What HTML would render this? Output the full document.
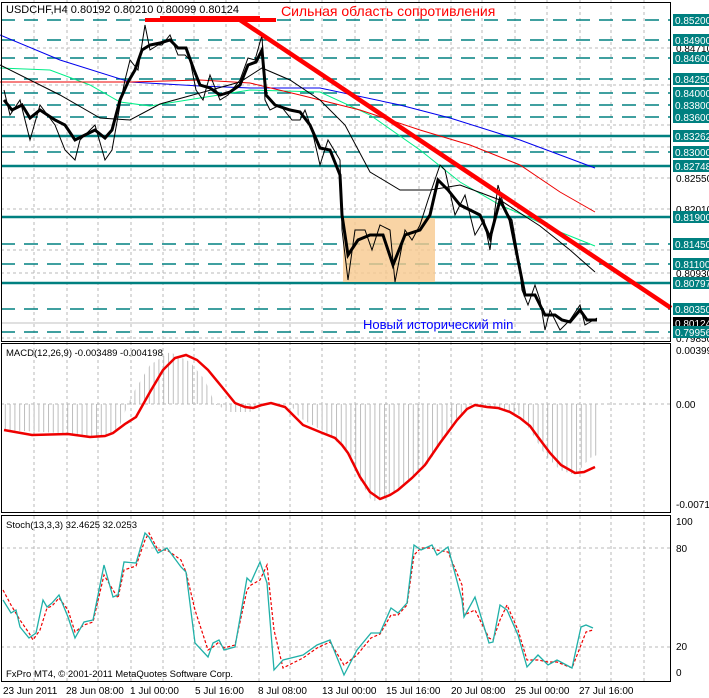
<!DOCTYPE html>
<html><head><meta charset="utf-8"><style>
html,body{margin:0;padding:0;background:#fff;}
body{width:709px;height:698px;overflow:hidden;font-family:"Liberation Sans",sans-serif;}
svg{display:block}
</style></head><body>
<svg width="709" height="698" viewBox="0 0 709 698" xmlns="http://www.w3.org/2000/svg" font-family="Liberation Sans, DejaVu Sans, sans-serif">
<defs>
<pattern id="hs" width="4.8" height="10" patternUnits="userSpaceOnUse"><rect x="0" y="0" width="1" height="10" fill="#bdbdbd"/></pattern>
</defs>
<rect width="709" height="698" fill="#fff"/>
<g stroke="#b8b8b8" stroke-dasharray="3,3" stroke-width="1">
<path d="M34 0V681M67 0V681M98 0V681M131 0V681M163 0V681M194 0V681M226 0V681M259 0V681M290 0V681M322 0V681M355 0V681M386 0V681M419 0V681M451 0V681M482 0V681M515 0V681M547 0V681M580 0V681M611 0V681M644 0V681"/>
<path d="M1 48H671M1 85H671M1 125H671M1 147H671M1 178H671M1 209H671M1 250H671M1 273H671M1 338H671"/>
<path d="M1 404H671M1 548H671M1 647H671"/>
</g>
<g stroke="#008080" stroke-width="1.5" stroke-dasharray="14,9">
<path d="M1 20H671M1 40H671M1 58H671M1 79H671M1 93H671M1 105H671M1 117H671M1 152H671M1 244H671M1 264H671M1 309H671M1 332H671"/>
</g>
<g stroke="#008080" stroke-width="2.5">
<path d="M1 136H671M1 166H671M1 217H671M1 283H671"/>
</g>
<line x1="1" y1="323" x2="671" y2="323" stroke="#c0c0c0"/>
<rect x="343" y="218" width="92" height="64" fill="#f8c98e" opacity="0.8"/>
<polyline fill="none" stroke="#0000ee" stroke-width="1" points="0,35 60,60 130,82 200,86 250,88 320,88 400,105 450,118 520,140 595,168"/>
<polyline fill="none" stroke="#00ee88" stroke-width="1" points="0,68 50,70 90,85 120,102 150,106 200,98 250,90 320,92 370,115 420,150 460,182 500,205 530,218 560,232 595,246"/>
<polyline fill="none" stroke="#ee0000" stroke-width="1" points="0,82 130,82 200,80 250,83 300,95 360,110 420,130 470,145 520,165 560,192 595,212"/>
<polyline fill="none" stroke="#000" stroke-width="1" points="0,65 60,95 100,118 130,120 160,104 200,93 240,82 262,68 290,80 320,100 345,125 370,172 400,190 430,190 460,185 500,200 540,226 570,250 595,272"/>
<polyline fill="none" stroke="#000" stroke-width="1" points="4,90 10,115 20,100 30,140 40,105 55,125 65,150 75,160 80,140 95,125 105,160 112,150 120,105 125,80 130,60 138,70 145,25 150,50 158,45 162,45 170,35 178,55 185,55 190,60 196,90 203,100 210,75 220,100 228,95 240,80 248,58 255,60 262,35 265,100 270,110 280,105 292,120 300,120 305,110 312,130 320,165 328,140 340,160 342,230 348,280 355,230 365,230 372,250 380,225 390,230 395,282 405,230 412,240 420,225 428,200 440,165 445,170 455,215 465,195 475,235 484,220 490,250 498,185 505,210 512,220 518,255 522,290 528,305 535,285 540,300 545,330 550,310 560,330 570,320 580,305 585,325 597,318"/>
<polyline fill="none" stroke="#000" stroke-width="3" points="4,100 12,110 22,105 30,118 40,110 55,120 65,125 75,140 85,135 95,130 105,138 112,130 120,100 128,82 135,70 142,50 150,45 160,43 170,40 178,48 186,48 194,70 200,85 210,88 220,95 230,92 240,85 248,65 256,62 262,50 266,95 275,105 290,110 300,112 310,125 320,148 330,150 340,175 342,215 348,255 358,240 370,235 383,235 393,265 405,235 420,230 430,215 438,180 448,190 460,205 470,210 480,215 490,238 500,200 510,220 518,260 525,295 535,295 545,315 555,315 562,320 570,322 580,310 587,320 597,320"/>
<line x1="145" y1="20" x2="276" y2="20" stroke="#ff0000" stroke-width="4"/>
<line x1="160" y1="17" x2="260" y2="17" stroke="#ff0000" stroke-width="2"/>
<line x1="240" y1="20" x2="671" y2="308" stroke="#ff0000" stroke-width="4.5"/>
<text x="281" y="16" font-size="14" fill="#ff0000">Сильная область сопротивления</text>
<text x="363" y="329" font-size="13" fill="#0000ff">Новый исторический min</text>
<text x="6" y="13" font-size="11" fill="#000">USDCHF,H4  0.80192 0.80210 0.80099 0.80124</text>
<path d="M4 404 L4 430 L60 433 L100 437 L118 430 L128 404 L135 390 L150 365 L170 352 L190 362 L205 380 L215 404 L230 412 L250 412 L262 404 L290 404 L300 418 L330 435 L345 450 L360 480 L372 502 L390 495 L410 478 L425 468 L440 445 L455 420 L470 404 L485 406 L500 410 L520 415 L530 430 L545 455 L560 470 L575 475 L590 458 L597 455 L597 404 Z" fill="url(#hs)"/>
<polyline fill="none" stroke="#ee0000" stroke-width="2.5" points="4,430 32,435 68,434 90,437 105,436 113,433 125,424 136,417 150,392 163,370 175,358 186,355 197,360 208,370 222,387 235,403 245,407 253,408 262,405 271,403 285,407 303,425 320,432 335,438 342,445 348,453 360,477 370,492 380,499 390,495 398,490 412,478 425,465 440,443 457,420 467,409 475,405 487,407 498,408 510,412 520,418 530,426 538,437 550,453 561,465 575,473 584,472 595,467"/>
<text x="6" y="356" font-size="9.5" fill="#000">MACD(12,26,9) -0.003489 -0.004198</text>
<polyline fill="none" stroke="#ee0000" stroke-width="1.2" stroke-dasharray="3,2" points="3,590 11,605 20,620 29,633 33,640 40,630 47,608 52,606 59,598 68,610 75,632 84,625 93,622 104,575 113,590 118,598 124,570 136,566 145,540 149,533 158,550 167,550 181,560 186,572 195,610 208,650 213,647 219,642 224,648 235,645 247,590 251,585 260,580 267,565 274,630 283,668 303,658 317,648 330,642 344,665 357,655 371,638 380,634 391,615 398,615 407,605 414,555 421,548 432,548 437,550 448,552 462,585 464,615 475,610 489,638 493,640 500,620 507,605 518,630 527,660 538,660 548,662 557,662 572,668 581,645 586,632 593,630"/>
<polyline fill="none" stroke="#20b0a8" stroke-width="1.3" points="3,600 11,613 16,610 20,627 29,638 36,633 43,600 47,607 52,603 59,595 68,617 75,638 84,622 93,620 104,565 113,597 118,595 124,562 136,563 145,533 149,537 158,553 167,548 181,567 186,572 195,643 208,657 213,643 219,640 224,650 235,647 247,578 251,582 260,562 267,583 274,670 283,660 303,655 317,645 330,640 344,675 357,650 371,633 380,633 391,608 398,613 407,603 414,545 421,550 432,545 437,555 448,547 462,600 464,617 475,597 489,643 493,642 500,605 507,610 518,635 527,667 538,655 548,665 557,660 572,668 581,627 586,625 593,628"/>
<text x="6" y="528" font-size="9.5" fill="#000">Stoch(13,3,3) 32.4625 32.0253</text>
<text x="6" y="677" font-size="9.5" fill="#000">FxPro MT4, © 2001-2011 MetaQuotes Software Corp.</text>
<g fill="none" stroke="#000" stroke-width="1">
<rect x="1.5" y="2.5" width="669" height="339"/>
<rect x="1.5" y="343.5" width="669" height="169"/>
<rect x="1.5" y="515.5" width="669" height="166"/>
</g>
<g font-size="10" fill="#000">
<text x="676" y="52">0.84710</text>
<text x="676" y="182">0.82550</text>
<text x="676" y="213">0.82010</text>
<text x="676" y="277">0.80930</text>
<text x="676" y="342">0.79850</text>
<text x="676" y="354">0.003996</text>
<text x="676" y="408">0.00</text>
<text x="676" y="508">-0.00714</text>
<text x="676" y="525">100</text>
<text x="676" y="552">80</text>
<text x="676" y="650">20</text>
<text x="676" y="676">0</text>
</g>
<g font-size="10">
<rect x="673" y="14" width="36" height="12" fill="#008080"/><text x="675" y="24" fill="#fff">0.85200</text>
<rect x="673" y="34" width="36" height="12" fill="#008080"/><text x="675" y="44" fill="#fff">0.84900</text>
<rect x="673" y="52" width="36" height="12" fill="#008080"/><text x="675" y="62" fill="#fff">0.84600</text>
<rect x="673" y="73" width="36" height="12" fill="#008080"/><text x="675" y="83" fill="#fff">0.84250</text>
<rect x="673" y="87" width="36" height="12" fill="#008080"/><text x="675" y="97" fill="#fff">0.84000</text>
<rect x="673" y="99" width="36" height="12" fill="#008080"/><text x="675" y="109" fill="#fff">0.83800</text>
<rect x="673" y="111" width="36" height="12" fill="#008080"/><text x="675" y="121" fill="#fff">0.83600</text>
<rect x="673" y="130" width="36" height="12" fill="#008080"/><text x="675" y="140" fill="#fff">0.83262</text>
<rect x="673" y="146" width="36" height="12" fill="#008080"/><text x="675" y="156" fill="#fff">0.83000</text>
<rect x="673" y="160" width="36" height="12" fill="#008080"/><text x="675" y="170" fill="#fff">0.82748</text>
<rect x="673" y="211" width="36" height="12" fill="#008080"/><text x="675" y="221" fill="#fff">0.81900</text>
<rect x="673" y="238" width="36" height="12" fill="#008080"/><text x="675" y="248" fill="#fff">0.81450</text>
<rect x="673" y="258" width="36" height="12" fill="#008080"/><text x="675" y="268" fill="#fff">0.81100</text>
<rect x="673" y="277" width="36" height="12" fill="#008080"/><text x="675" y="287" fill="#fff">0.80797</text>
<rect x="673" y="303" width="36" height="12" fill="#008080"/><text x="675" y="313" fill="#fff">0.80350</text>
<rect x="673" y="317" width="36" height="12" fill="#000"/><text x="675" y="327" fill="#fff">0.80124</text>
<rect x="673" y="326" width="36" height="12" fill="#008080"/><text x="675" y="336" fill="#fff">0.79956</text>
</g>
<g font-size="10" fill="#000">
<text x="3" y="694">23 Jun 2011</text>
<text x="66" y="694">28 Jun 08:00</text>
<text x="130" y="694">1 Jul 00:00</text>
<text x="195" y="694">5 Jul 16:00</text>
<text x="258" y="694">8 Jul 08:00</text>
<text x="322" y="694">13 Jul 00:00</text>
<text x="386" y="694">15 Jul 16:00</text>
<text x="451" y="694">20 Jul 08:00</text>
<text x="515" y="694">25 Jul 00:00</text>
<text x="579" y="694">27 Jul 16:00</text>
</g>
</svg>
</body></html>
